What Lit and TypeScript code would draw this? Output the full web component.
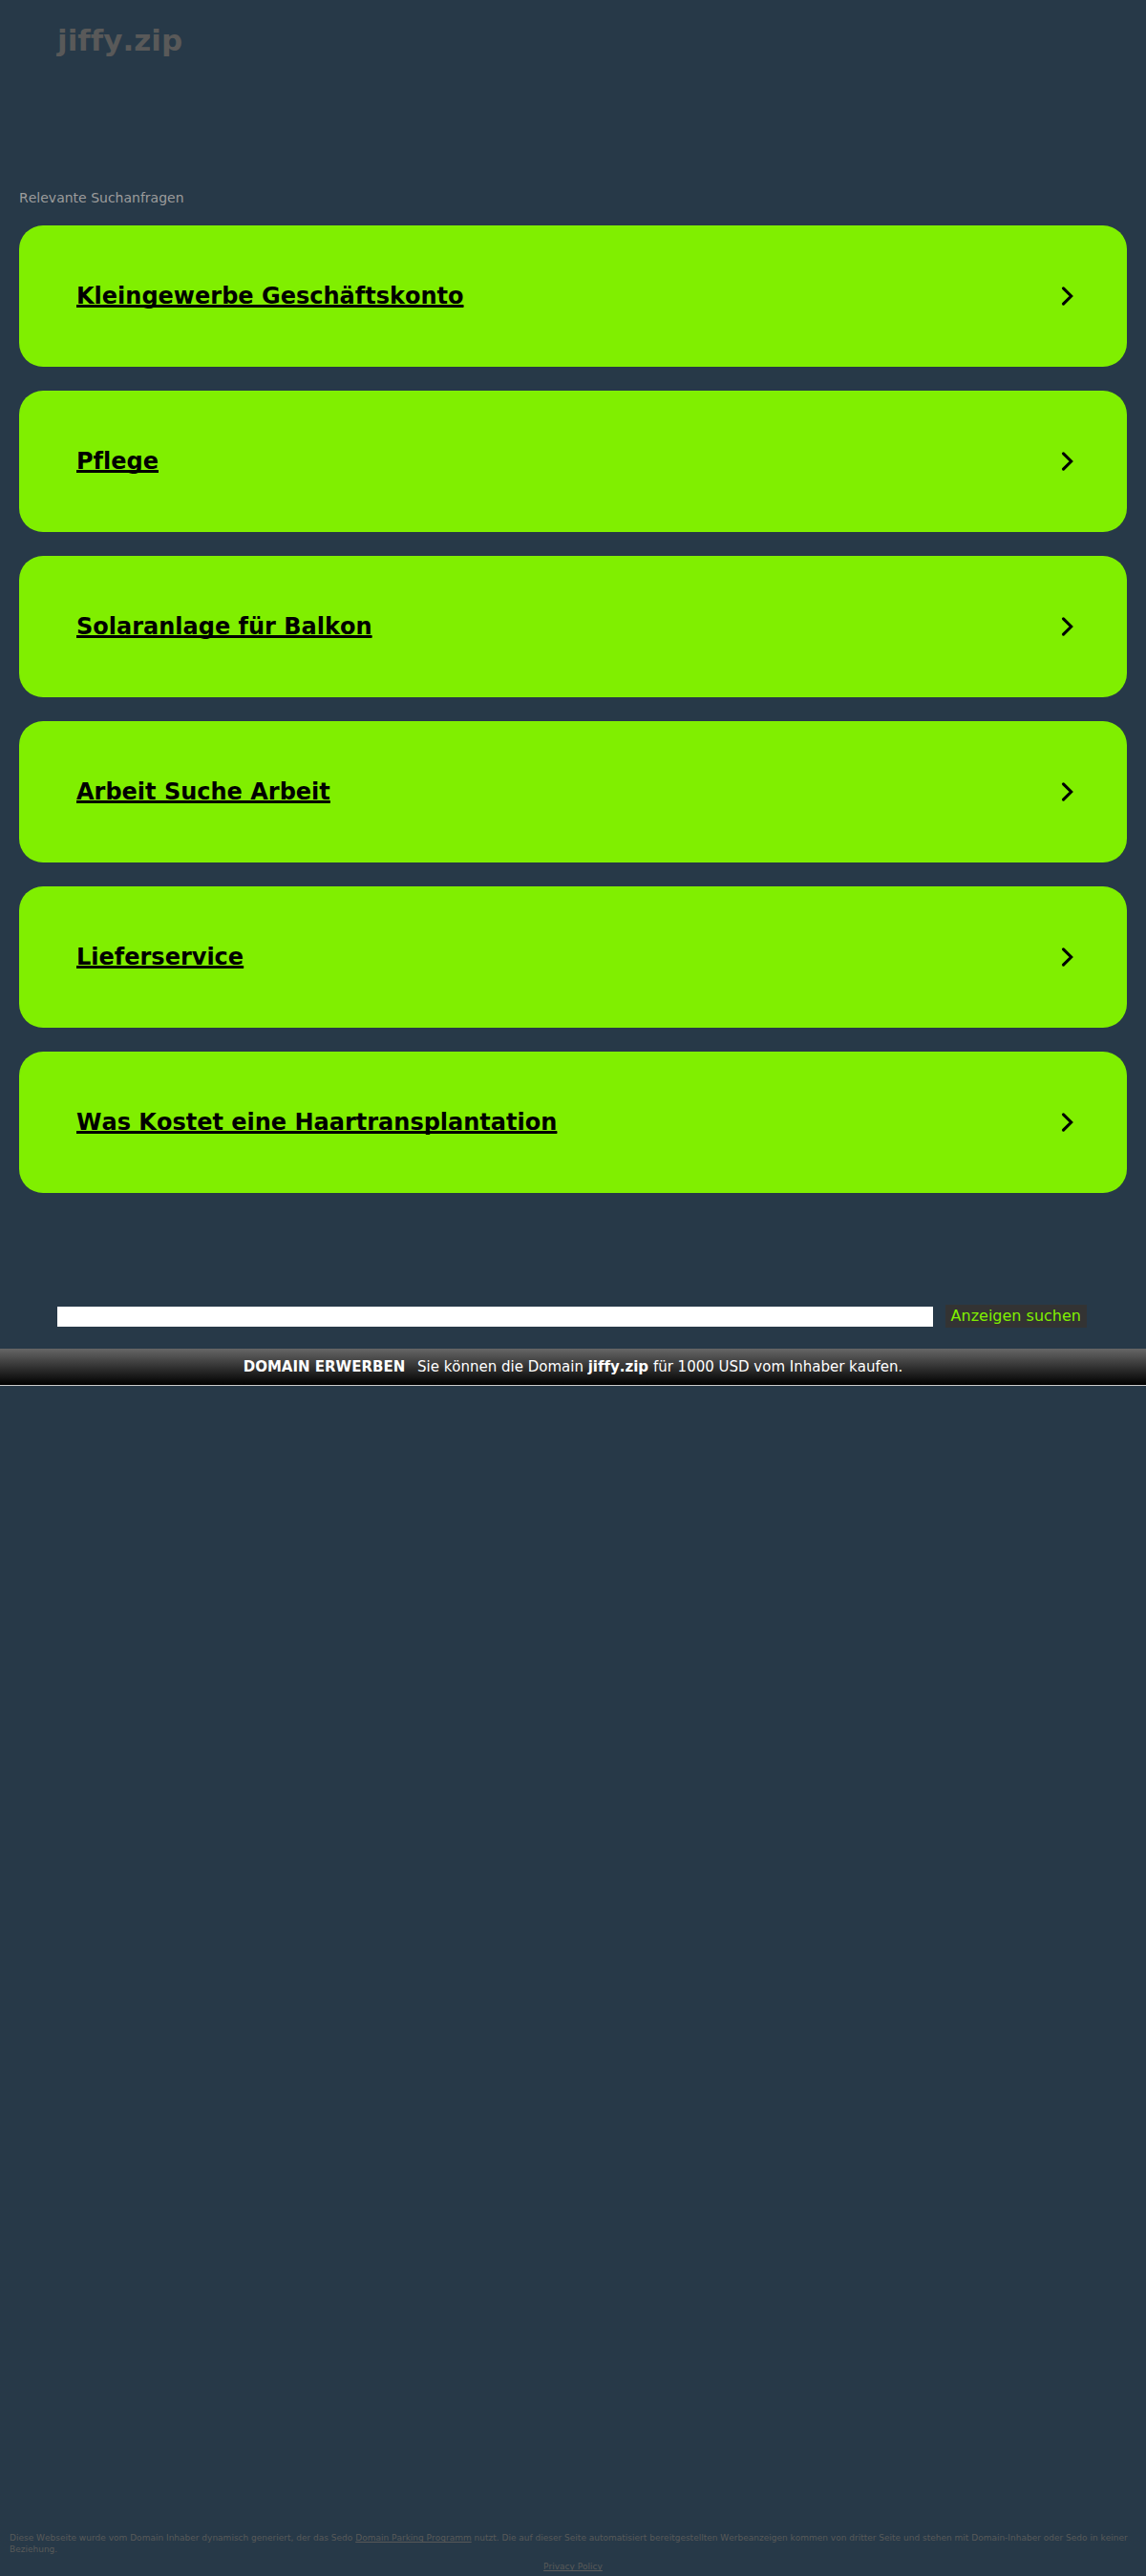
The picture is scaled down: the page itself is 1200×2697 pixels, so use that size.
import { LitElement, html, css } from "lit";
import { customElement, property } from "lit/decorators.js";

@customElement("search-card")
class SearchCard extends LitElement {
  @property() label = "";

  static styles = css`
    :host {
      display: block;
    }
    .card {
      display: flex;
      align-items: center;
      justify-content: space-between;
      box-sizing: border-box;
      padding: 60px 50px 60px 60px;
      border-radius: 25px;
      background: #80ef00;
      color: #000;
      font-size: 24px;
      font-weight: bold;
      line-height: 28px;
    }
    .text {
      text-decoration: underline;
      text-decoration-skip-ink: none;
      text-underline-offset: 1px;
    }
    .arrow {
      flex: none;
      width: 24px;
      height: 24px;
    }
  `;

  render() {
    return html`<a class="card" href="#">
      <span class="text">${this.label}</span>
      <svg class="arrow" viewBox="0 0 24 24" aria-hidden="true">
        <path d="M7.5 3.8 15.7 12 7.5 20.2" fill="none" stroke="#000" stroke-width="3.1" stroke-linecap="round" />
      </svg>
    </a>`;
  }
}

@customElement("app-root")
class AppRoot extends LitElement {
  private terms = [
    "Kleingewerbe Geschäftskonto",
    "Pflege",
    "Solaranlage für Balkon",
    "Arbeit Suche Arbeit",
    "Lieferservice",
    "Was Kostet eine Haartransplantation",
  ];

  static styles = css`
    :host {
      display: flex;
      flex-direction: column;
      box-sizing: border-box;
      min-height: 100vh;
      background: #273948;
      color: #595959;
      font-family: "DejaVu Sans", Verdana, sans-serif;
      font-kerning: none;
      font-variant-ligatures: none;
    }
    .header {
      padding: 24px 60px 0;
    }
    .title {
      margin: 0;
      font-size: 31px;
      line-height: 37px;
    }
    .related {
      padding: 138px 20px 0;
    }
    .heading {
      margin: 0 0 20px;
      color: #9c9c9c;
      font-size: 14px;
      font-weight: normal;
      line-height: 17px;
    }
    .list {
      display: flex;
      flex-direction: column;
      gap: 25px;
      margin: 0;
      padding: 0;
      list-style: none;
    }
    .search {
      display: flex;
      align-items: center;
      gap: 13px;
      margin: 117px 62px 22px 60px;
    }
    .query {
      flex: 1;
      min-width: 0;
      box-sizing: border-box;
      height: 21px;
      margin: 0;
      padding: 1px 2px;
      border: 0;
      border-radius: 0;
      background: #fff;
      font: inherit;
      font-size: 14px;
    }
    .submit {
      margin: 0;
      padding: 2px 6px 3px;
      border: 0;
      background: #333;
      color: #80ef00;
      font: inherit;
      font-size: 16px;
      line-height: 19px;
    }
    .offer {
      display: block;
      padding: 10px 0;
      border-bottom: 1px solid #ccc;
      background: linear-gradient(#666, #000);
      color: #fff;
      font-size: 15px;
      line-height: 18px;
      text-align: center;
      text-decoration: none;
    }
    .lead {
      margin-right: 8px;
    }
    .footer {
      margin-top: auto;
      padding: 0 10px 4px;
      font-size: 9px;
      line-height: 12px;
    }
    .note {
      margin: 0 0 6px;
    }
    .policy {
      margin: 0;
      text-align: center;
    }
    .link {
      color: inherit;
      text-decoration-skip-ink: none;
    }
  `;

  render() {
    return html`
      <header class="header"><h1 class="title">jiffy.zip</h1></header>
      <section class="related">
        <h2 class="heading">Relevante Suchanfragen</h2>
        <ul class="list">
          ${this.terms.map((t) => html`<li><search-card .label=${t}></search-card></li>`)}
        </ul>
      </section>
      <form class="search" @submit=${(e: Event) => e.preventDefault()}>
        <input class="query" type="text" aria-label="Anzeigen suchen" />
        <button class="submit" type="submit">Anzeigen suchen</button>
      </form>
      <a class="offer" href="#"><b class="lead">DOMAIN ERWERBEN</b> Sie können die Domain <b>jiffy.zip</b> für 1000 USD vom Inhaber kaufen.</a>
      <footer class="footer">
        <p class="note">Diese Webseite wurde vom Domain Inhaber dynamisch generiert, der das Sedo <a class="link" href="#">Domain Parking Programm</a> nutzt. Die auf dieser Seite automatisiert bereitgestellten Werbeanzeigen kommen von dritter Seite und stehen mit Domain-Inhaber oder Sedo in keiner Beziehung.</p>
        <p class="policy"><a class="link" href="#">Privacy Policy</a></p>
      </footer>
    `;
  }
}
